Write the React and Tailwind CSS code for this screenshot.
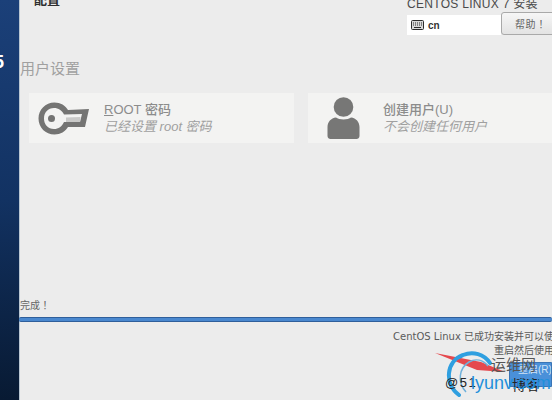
function KeyIcon() {
  return (
    <svg width="51" height="33" viewBox="0 0 51 33" className="shrink-0">
      <path
        fillRule="evenodd"
        fill="#747473"
        d="M16.5 0.5C22.5 0.5 27.5 3.5 30 8L51 7L47 25L30 25C27.5 29.5 22.5 32.5 16.5 32.5C7.5 32.5 0.5 25.5 0.5 16.5C0.5 7.5 7.5 0.5 16.5 0.5ZM16 6C10 6 6 10.5 6 16.5C6 22.5 10 27 16 27C20.5 27 24 24.5 26 20L42 20L44 12L26 12.5C24 8.5 20.5 6 16 6Z"
      />
      <circle cx="13.5" cy="16.5" r="3.5" fill="#747473" />
      <path d="M28 15.5L42.5 15L42 20L28 20Z" fill="#c9c9c8" />
    </svg>
  );
}

function UserIcon() {
  return (
    <svg width="33" height="42" viewBox="0 0 33 42" className="shrink-0">
      <circle cx="16.5" cy="10" r="9.8" fill="#777776" />
      <path
        d="M9 20.5C12 23 21 23 24 20.5C29 21 32.5 25 32.5 30L32.5 39C32.5 41 31 42 29.5 42L3.5 42C2 42 0.5 41 0.5 39L0.5 30C0.5 25 4 21 9 20.5Z"
        fill="#777776"
      />
    </svg>
  );
}

function KeyboardIcon() {
  return (
    <svg width="13" height="10" viewBox="0 0 13 10" className="shrink-0">
      <rect x="0.5" y="0.5" width="12" height="9" rx="1" fill="#d8d8d8" stroke="#2b2b2b" />
      <path d="M2 3H11M2 5H11" stroke="#2b2b2b" strokeWidth="1" strokeDasharray="1 1" />
      <path d="M3 7.5H10" stroke="#2b2b2b" strokeWidth="1" />
    </svg>
  );
}

function Spoke({ icon, title, sub, className }) {
  return (
    <div className={`h-[50px] bg-[#f3f3f2] flex items-center ${className}`}>
      {icon}
      <div className="flex flex-col">
        <span className="text-[13px] leading-[17px] font-medium text-[#8c8c8c]">{title}</span>
        <span className="text-[13px] leading-[17px] italic text-[#a0a0a0]">{sub}</span>
      </div>
    </div>
  );
}

export default function App() {
  return (
    <div className="w-[552px] h-[400px] flex overflow-hidden bg-[#ececec] font-['Liberation_Sans','Noto_Sans_CJK_SC',sans-serif]">
      {/* sidebar, only its right edge is visible */}
      <div className="w-[20px] shrink-0 h-full overflow-hidden border-r border-[#b9c6d2] bg-gradient-to-b from-[#1b4079] via-[#123262] to-[#081a33]">
        <div className="mt-[52px] -ml-[6px] text-[18px] leading-[20px] font-bold text-white">5</div>
      </div>

      <div className="flex-1 min-w-0 flex flex-col relative">
        {/* header */}
        <div className="h-[36px] flex justify-between">
          <span className="ml-[14px] -mt-[8px] text-[13px] leading-[16px] font-bold text-[#2e2e2e]">配置</span>
          <div className="w-[145px] shrink-0 flex flex-col">
            <span className="-mt-[4px] h-[16px] text-[12px] leading-[16px] tracking-[0.3px] text-[#4a4a4a] whitespace-nowrap">CENTOS LINUX 7 安装</span>
            <div className="flex h-[24px]">
              <div className="w-[94px] shrink-0 mt-[3px] h-[20px] bg-white flex items-center pl-[4px] gap-[4px]">
                <KeyboardIcon />
                <span className="text-[10px] font-bold text-[#333]">cn</span>
              </div>
              <button className="w-[60px] shrink-0 h-[23px] rounded-[3px] border border-[#a9a9a9] bg-gradient-to-b from-[#f6f6f6] to-[#e3e3e3] text-[10px] text-[#666] text-left pl-[13px] tracking-[0.5px] font-['Noto_Sans_CJK_TC',sans-serif]">
                帮助！
              </button>
            </div>
          </div>
        </div>

        {/* spokes */}
        <div className="mt-[25px] h-[16px] text-[15px] leading-[16px] text-[#a0a0a0]">用户设置</div>
        <div className="mt-[16px] ml-[9px] flex gap-[14px]">
          <Spoke
            className="w-[265px] shrink-0 pl-[9px] gap-[15px]"
            icon={<KeyIcon />}
            title={<><span className="underline">R</span>OOT 密码</>}
            sub="已经设置 root 密码"
          />
          <Spoke
            className="w-[260px] shrink-0 pl-[19px] gap-[23px]"
            icon={<UserIcon />}
            title="创建用户(U)"
            sub="不会创建任何用户"
          />
        </div>

        {/* progress */}
        <div className="mt-[155px] h-[14px] text-[10px] leading-[14px] text-[#666] font-['Noto_Sans_CJK_TC',sans-serif]">完成！</div>
        <div className="mt-[5px] -ml-[1px] h-[5px] rounded-[2px] bg-[#4a88cf] border-b border-[#2f5f9b] border-t" />

        {/* reboot message */}
        <div className="mt-[8px] -mr-[2px] text-[10px] leading-[14px] text-[#5a5a5a] text-right whitespace-nowrap flex flex-col items-end font-['DejaVu_Sans','Noto_Sans_CJK_SC',sans-serif]">
          <span>CentOS Linux 已成功安装并可以使</span>
          <span>重启然后使用</span>
        </div>
        <div className="flex justify-end mt-[4px]">
          <div className="w-[43px] h-[25px] bg-[#4a90d9] border border-[#3a75b5] rounded-l-[2px] text-[10px] leading-[14px] text-[#cfe2f5] pl-[8px] whitespace-nowrap overflow-hidden">重启(R)</div>
        </div>

        {/* watermark over the corner */}
        <svg width="110" height="50" viewBox="0 0 110 50" className="absolute left-[415px] top-[350px]">
          <path d="M0 3L46 12L70 22L42 20Z" fill="#e5484d" />
          <path d="M24 45C9 34 11 11 28 5C38 1 49 4 55 13" fill="none" stroke="#2f9fe0" strokeWidth="4" strokeLinecap="round" />
          <path d="M31 42C22 32 24 18 34 12C41 8 48 10 53 16" fill="none" stroke="#6fb0da" strokeWidth="1.5" />
        </svg>
        <span className="absolute left-[471px] top-[356px] text-[15px] leading-[18px] text-[#555]">运维网</span>
        <span className="absolute left-[492px] top-[377px] text-[14px] leading-[16px] text-[#222] whitespace-nowrap">博客</span>
        <span className="absolute left-[425px] top-[375px] text-[13px] leading-[16px] tracking-[1.5px] text-[#222] whitespace-nowrap">@51</span>
        <span className="absolute left-[451px] top-[374px] text-[18px] leading-[18px] font-medium text-[#1f8fdb] whitespace-nowrap">lyunv.com</span>
      </div>
    </div>
  );
}
